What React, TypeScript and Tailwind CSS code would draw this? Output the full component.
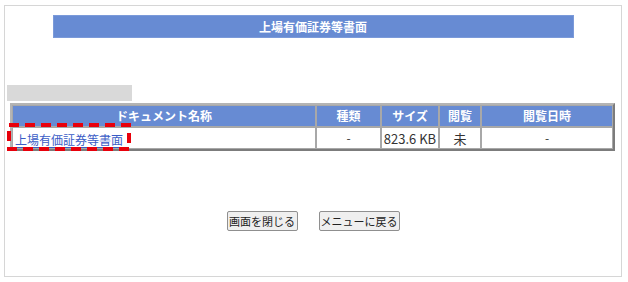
import React from 'react';

const columns = [
  { label: 'ドキュメント名称', width: 'w-[304px]' },
  { label: '種類', width: 'w-[65px]' },
  { label: 'サイズ', width: 'w-[58px]' },
  { label: '閲覧', width: 'w-[42px]' },
  { label: '閲覧日時', width: 'w-[132px]' },
];

export default function App() {
  return (
    <div className="bg-white w-[628px] h-[282px] pt-[5px] pl-[4px] font-['Noto_Sans_CJK_JP','Noto_Sans',sans-serif] text-[#333]">
      <div className="w-[618px] h-[272px] border border-[#d6d6d6] pt-[9px] flex flex-col">
        {/* Title bar */}
        <div className="mx-auto w-[521px] h-[23px] bg-[#678bd3] border border-[#7b9ad9] flex items-center justify-center">
          <span className="text-white text-[12px] font-bold leading-none">上場有価証券等書面</span>
        </div>

        <div className="ml-[2px] mt-[47px] w-[125px] h-[16px] bg-[#d9d9d9]" />

        {/* Document table */}
        <div className="relative ml-[5px] mt-[2px]">
          <table className="w-[605px] table-fixed border-separate border-spacing-0 border-2 border-t-[#b4b4b4] border-l-[#b4b4b4] border-r-[#7c7c7c] border-b-[#7c7c7c]">
            <thead>
              <tr>
                {columns.map((c) => (
                  <th
                    key={c.label}
                    className={`${c.width} h-[22px] p-0 border border-[#a8a8a8] bg-[#678bd3] text-white text-[12px] font-bold text-center leading-none`}
                  >
                    {c.label}
                  </th>
                ))}
              </tr>
            </thead>
            <tbody>
              <tr>
                <td className="h-[22px] p-0 pl-[2px] border border-[#a8a8a8] text-left leading-none">
                  <a href="#" className="text-[12px] text-[#3a5cc6] underline underline-offset-2">上場有価証券等書面</a>
                </td>
                <td className="h-[22px] p-0 border border-[#a8a8a8] text-center text-[12px] leading-none">-</td>
                <td className="h-[22px] p-0 border border-[#a8a8a8] text-center text-[13px] leading-none whitespace-nowrap">823.6 KB</td>
                <td className="h-[22px] p-0 border border-[#a8a8a8] text-center text-[13px] leading-none">未</td>
                <td className="h-[22px] p-0 border border-[#a8a8a8] text-center text-[12px] leading-none">-</td>
              </tr>
            </tbody>
          </table>

          {/* Red annotation box around the link */}
          <svg className="absolute left-[-3px] top-[20px]" width="124" height="28" viewBox="0 0 124 28">
            <rect x="2" y="2" width="120" height="24" fill="none" stroke="#e8000b" strokeWidth="4" strokeDasharray="10 6" />
          </svg>
        </div>

        {/* Buttons */}
        <div className="mt-[60px] flex justify-center gap-[21px]">
          <button className="w-[71px] h-[20px] bg-[#efefef] border border-[#8f8f8f] rounded-[2px] text-[11px] text-[#222] leading-none">
            画面を閉じる
          </button>
          <button className="w-[81px] h-[20px] bg-[#efefef] border border-[#8f8f8f] rounded-[2px] text-[11px] text-[#222] leading-none">
            メニューに戻る
          </button>
        </div>
      </div>
    </div>
  );
}
